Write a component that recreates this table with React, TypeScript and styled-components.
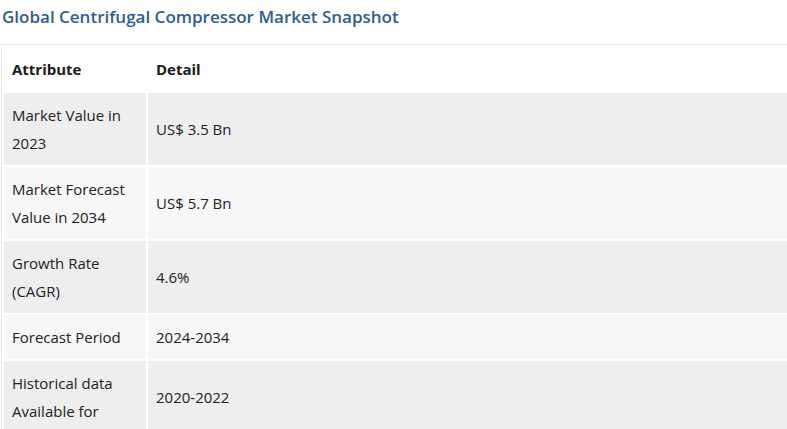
import styled, { createGlobalStyle } from "styled-components";

interface Row {
  attribute: string;
  detail: string;
}

const rows: Row[] = [
  { attribute: "Market Value in 2023", detail: "US$ 3.5 Bn" },
  { attribute: "Market Forecast Value in 2034", detail: "US$ 5.7 Bn" },
  { attribute: "Growth Rate (CAGR)", detail: "4.6%" },
  { attribute: "Forecast Period", detail: "2024-2034" },
  { attribute: "Historical data Available for", detail: "2020-2022" },
];

export default function App() {
  return (
    <>
      <GlobalStyle />
      <Page>
        <Title>Global Centrifugal Compressor Market Snapshot</Title>
        <Table>
          <colgroup>
            <Col width="142px" />
            <Col />
          </colgroup>
          <thead>
            <tr>
              <HeadCell>Attribute</HeadCell>
              <HeadCell>Detail</HeadCell>
            </tr>
          </thead>
          <tbody>
            {rows.map((row, index) => (
              <BodyRow key={row.attribute} striped={index % 2 === 1}>
                <Cell>{row.attribute}</Cell>
                <Cell>{row.detail}</Cell>
              </BodyRow>
            ))}
          </tbody>
        </Table>
      </Page>
    </>
  );
}

const GlobalStyle = createGlobalStyle`
  body {
    margin: 0;
    background: #ffffff;
    overflow: hidden;
    font-family: "Open Sans", "Noto Sans", sans-serif;
  }
`;

const Page = styled.div`
  padding: 0 0 0 1px;
`;

const Title = styled.h2`
  margin: 0;
  padding: 5px 0 0 1px;
  height: 44px;
  box-sizing: border-box;
  font-size: 17px;
  font-weight: 600;
  color: #2e5d98;
`;

const Table = styled.table`
  width: 820px;
  table-layout: fixed;
  border-collapse: separate;
  border-spacing: 2px;
  border: 1px solid #e6e6e6;
  font-size: 15px;
  color: #222222;
`;

const Col = styled.col<{ width?: string }>`
  width: ${(props) => props.width || "auto"};
`;

const HeadCell = styled.th`
  text-align: left;
  padding: 8px;
  line-height: 28px;
  font-weight: 700;
  color: #1a1a1a;
  background: #ffffff;
`;

const BodyRow = styled.tr<{ striped?: boolean }>`
  background: ${(props) => (props.striped ? "#f7f7f7" : "#eeeeee")};
`;

const Cell = styled.td`
  padding: 8px;
  line-height: 28px;
  vertical-align: middle;
`;
